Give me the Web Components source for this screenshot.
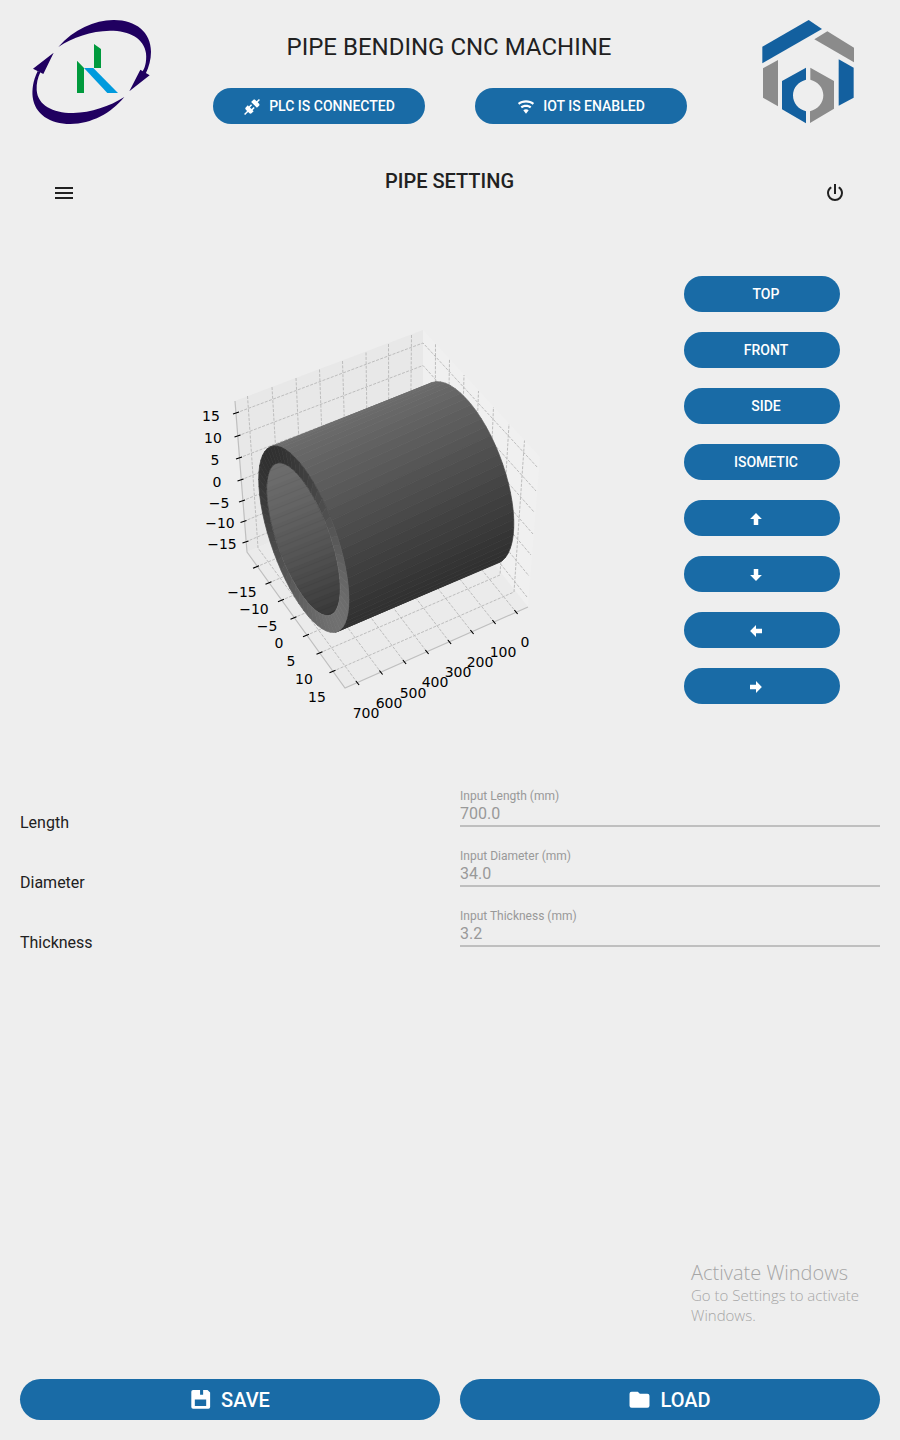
<!DOCTYPE html>
<html lang="en">
<head>
<meta charset="utf-8">
<meta name="viewport" content="width=device-width, initial-scale=1">
<title>Pipe Bending CNC Machine</title>
<style>
  body { margin: 0; background: #eee; color: #212121; font-family: Roboto, "Liberation Sans", sans-serif; }
</style>
</head>
<body>
<pipe-app></pipe-app>

<script>
const ICONS = {
  connection: '<path d="M21.4 7.5C22.2 8.3 22.2 9.6 21.4 10.3L18.6 13.1L10.8 5.3L13.6 2.5C14.4 1.7 15.7 1.7 16.4 2.5L18.2 4.3L21.2 1.3L22.6 2.7L19.6 5.7L21.4 7.5M15.6 13.3L14.2 11.9L11.4 14.7L9.3 12.6L12.1 9.8L10.7 8.4L7.9 11.2L6.4 9.8L3.6 12.6C2.8 13.4 2.8 14.7 3.6 15.4L5.4 17.2L1.4 21.2L2.8 22.6L6.8 18.6L8.6 20.4C9.4 21.2 10.7 21.2 11.4 20.4L14.2 17.6L12.8 16.2L15.6 13.3Z"/>',
  wifi: '<path d="M12,21L15.6,16.2C14.6,15.45 13.35,15 12,15C10.65,15 9.4,15.45 8.4,16.2L12,21M12,3C7.95,3 4.21,4.34 1.2,6.6L3,9C5.5,7.12 8.62,6 12,6C15.38,6 18.5,7.12 21,9L22.8,6.6C19.79,4.34 16.05,3 12,3M12,9C9.3,9 6.81,9.89 4.8,11.4L6.6,13.8C8.1,12.67 9.97,12 12,12C14.03,12 15.9,12.67 17.4,13.8L19.2,11.4C17.19,9.89 14.7,9 12,9Z"/>',
  up: '<path d="M15,20H9V12H4.16L12,4.16L19.84,12H15V20Z"/>',
  down: '<path d="M9,4H15V12H19.84L12,19.84L4.16,12H9V4Z"/>',
  left: '<path d="M20,9V15H12V19.84L4.16,12L12,4.16V9H20Z"/>',
  right: '<path d="M4,15V9H12V4.16L19.84,12L12,19.84V15H4Z"/>',
  save: '<path fill-rule="evenodd" d="M3.500 1H5.500V9H18.500V1H20L23 4V20.500A2 2 0 0 1 21 22.500H3.500A2 2 0 0 1 1.500 20.500V3A2 2 0 0 1 3.500 1ZM5.500 12V19.500H18.500V12ZM5.500 1H11.500V6.500H15V1H18.500V9H5.500Z"/>',
  folder: '<path d="M10 3H3A2.4 2.4 0 0 0 .6 5.400V19A2.400 2.400 0 0 0 3 21.400H21A2.400 2.400 0 0 0 23.400 19V7.800A2.400 2.400 0 0 0 21 5.400H12.400Z"/>',
  menu: '<path d="M3,6H21V8H3V6M3,11H21V13H3V11M3,16H21V18H3V16Z"/>',
  power: '<path d="M16.56,5.44L15.11,6.89C16.84,7.94 18,9.83 18,12A6,6 0 0,1 12,18A6,6 0 0,1 6,12C6,9.83 7.16,7.94 8.88,6.88L7.44,5.44C5.36,6.88 4,9.28 4,12A8,8 0 0,0 12,20A8,8 0 0,0 20,12C20,9.28 18.64,6.88 16.56,5.44M13,3H11V13H13"/>'
};
const icon = name => `<svg viewBox="0 0 24 24" aria-hidden="true">${ICONS[name] || ''}</svg>`;

function define(name, render) {
  customElements.define(name, class extends HTMLElement {
    constructor() { super(); this.attachShadow({ mode: 'open' }); }
    connectedCallback() { this.shadowRoot.innerHTML = render(this); }
  });
}

/* Pill button: an icon place followed by a slotted caption. */
define('pill-button', el => `
<style>
  :host { display: block; }
  button { box-sizing: border-box; width: 100%; height: 36px; border: 0; border-radius: 24px; padding: 0 16px;
    display: flex; align-items: center; justify-content: center; gap: 8px; background: #196ba6; color: #fff;
    font: 500 14px/20px Roboto, "Liberation Sans", sans-serif; white-space: nowrap; cursor: pointer; }
  svg { width: 18px; height: 18px; fill: currentColor; margin-top: 2px; flex: none; }
  span { min-width: 4px; }
  :host(:not([icon])) svg { width: 0; }
  :host([large]) button { height: 41px; font-size: 20px; line-height: 24px; gap: 10px; }
  :host([large]) svg { width: 21px; height: 21px; margin-top: 0; }
</style>
<button type="button" aria-label="${el.getAttribute('label') || el.textContent.trim()}">${icon(el.getAttribute('icon'))}<span><slot></slot></span></button>`);

define('icon-button', el => `
<style>
  :host { display: block; }
  button { display: block; width: 48px; height: 48px; padding: 12px; border: 0; background: none; color: inherit; cursor: pointer; }
  svg { display: block; width: 24px; height: 24px; fill: currentColor; }
</style>
<button type="button" aria-label="${el.getAttribute('label')}">${icon(el.getAttribute('icon'))}</button>`);

define('orbit-logo', () => `
<style>:host { display: block; } svg { display: block; width: 145px; height: 125px; }</style>
<svg viewBox="0 0 435 375" role="img" aria-label="K logo">
  <g fill="#200060">
    <path d="M115 111C161 58 224 31 280 30C346 29 393 66 393 125C393 148 387 170 377 191L367 185C373 178 381 157 378 130C373 86 329 62 270 62C213 63 158 82 115 111Z"/>
    <path d="M53 183C38 215 36 240 38 261C44 312 90 342 151 342C215 341 273 310 313 261C269 289 213 308 160 309C101 310 53 287 50 240C49 220 53 204 61 187Z"/>
    <path d="M101 128L39 176L70 192ZM328 244L361 179L389 196Z"/>
  </g>
  <path fill="#009a3d" d="M171 152L192 174V249H171ZM222 102L243 117V174H222Z"/>
  <path fill="#009add" d="M192 174H220L294 249H262Z"/>
</svg>`);

define('hex-logo', () => `
<style>:host { display: block; } svg { display: block; width: 125px; height: 125px; }</style>
<svg viewBox="0 0 375 375" role="img" aria-label="Hexagon logo">
  <g fill="#13609f">
    <path d="M52 110L191 30L231 57L52 160Z"/>
    <path d="M281 148L326 173V263L281 287Z"/>
    <path d="M183 173V209C160 215 144 233 144 256C144 280 160 298 183 304V340L111 298V213Z"/>
  </g>
  <g fill="#8b8b8b">
    <path d="M208 88L247 64L327 113V157Z"/>
    <path d="M54 175L99 150V289L54 263Z"/>
    <path d="M196 173L267 213V296L195 339V304C218 298 235 280 235 256C235 233 219 215 196 209Z"/>
  </g>
</svg>`);

define('machine-header', () => `
<style>
  :host { display: grid; grid-template-columns: 184px 1fr 184px; align-items: start; padding: 10px 0 9px; }
  orbit-logo { justify-self: center; }
  hex-logo { justify-self: center; padding-right: 2px; }
  .middle { padding: 22px 0 0; }
  h1 { margin: 0; font-size: 24px; line-height: 30px; font-weight: 400; text-align: center; padding-right: 2px; }
  .status { display: flex; justify-content: center; gap: 50px; margin-top: 26px; }
  .status pill-button { flex: 0 1 212px; }
</style>
<orbit-logo></orbit-logo>
<div class="middle">
  <h1>PIPE BENDING CNC MACHINE</h1>
  <div class="status">
    <pill-button icon="connection">PLC IS CONNECTED</pill-button>
    <pill-button icon="wifi">IOT IS ENABLED</pill-button>
  </div>
</div>
<hex-logo></hex-logo>`);

define('screen-bar', () => `
<style>
  :host { display: grid; grid-template-columns: 48px 1fr 48px; padding: 25px 41px 0 40px; }
  h2 { margin: 0; font-size: 20px; line-height: 24px; font-weight: 500; text-align: center; }
</style>
<icon-button icon="menu" label="Menu"></icon-button>
<h2><slot></slot></h2>
<icon-button icon="power" label="Power"></icon-button>`);

/* Perspective plot of the pipe: walls, grid, ticks and a shaded tube. */
function drawPlot() {
  const grey = v => { v = Math.round(v); return `rgb(${v},${v},${v})`; };
  const poly = (pts, fill, stroke) => `<polygon points="${pts.map(p => p.map(n => n.toFixed(2)).join()).join(' ')}" fill="${fill}"${stroke ? ` stroke="${stroke}" stroke-width=".7"` : ''}/>`;
  const path = pts => 'M' + pts.map(p => p.join()).join('L');
  const lerp = (a, b, k) => a + (b - a) * k;

  const zAxis = [[236, 413], [237.5, 436], [239, 458], [240.5, 480], [242, 501], [243.5, 521.5], [245.5, 542]];
  const zCorner = [343, 365.5, 387, 408, 428, 447, 467];
  const zRight = [[538, 468], [536, 491], [534, 512], [533, 534], [531, 555], [529, 576], [527, 597]];
  const xTop = [[247.5, 396], [272, 387], [296, 378], [319.5, 369.5], [342.5, 361], [366, 352.5], [388.5, 344], [411.5, 335]];
  const xBase = [[258, 548], [281, 538], [303, 528], [325, 518], [347, 508], [368, 499], [389, 490], [410, 481]];
  const xAxis = [[357.5, 683], [381, 672.5], [404.5, 662], [427, 652], [449.5, 642], [472, 632], [494, 622], [516, 612]];
  const yAxis = [[256, 567], [268.5, 583], [281, 600.5], [293.5, 618], [306, 635.5], [319.5, 653], [332.5, 671.5]];
  const yBase = [[435, 492], [447, 508], [460, 525], [473, 541], [487, 558], [500, 575], [514, 592]];
  const yTop = [[435.5, 344], [449.5, 359], [464, 375], [478.5, 391], [493.5, 407], [509, 424], [524.5, 440.5]];

  let out = poly([[235, 401], [423, 330], [423, 475], [247, 552]], '#e8e8e8')
    + poly([[423, 330], [540, 457], [528, 607], [423, 475]], '#f0f0f0')
    + poly([[247, 552], [345, 688], [528, 607], [423, 475]], '#ebebeb');
  const grid = [
    ...zAxis.map((p, i) => path([p, [423, zCorner[i]], zRight[i]])),
    ...xTop.map((p, i) => path([p, xBase[i], xAxis[i]])),
    ...yAxis.map((p, i) => path([p, yBase[i], yTop[i]]))
  ];
  out += `<path d="${grid.join('')}" fill="none" stroke="#bdbdbd" stroke-width="1" stroke-dasharray="3 1.4"/>`;
  out += '<path d="M235 401L247 552L345 688L528 607" fill="none" stroke="#bfbfbf" stroke-width="1.2"/>';
  const tick = (p, dx, dy) => path([[p[0] - dx, p[1] - dy], [p[0] + dx, p[1] + dy]]);
  out += `<path d="${[...zAxis.map(p => tick(p, 3, -1)), ...yAxis.map(p => tick(p, 3, -1.2)), ...xAxis.map(p => tick(p, 1.6, 2))].join('')}" stroke="#000" stroke-width="1.2" fill="none"/>`;

  const on = (e, t) => [e.x + e.w * Math.cos(t), e.y + e.h * Math.cos(t - e.d)];
  const front = { x: 303.8, y: 539.2, w: 45.1, h: 93.3, d: .87 };
  const bore = { x: 303.4, y: 539.2, w: 36.8, h: 76.4, d: .86 };
  const back = { x: 464.8, y: 472.9, w: 49, h: 91.2, d: .98 };

  const from = -2.4, to = .8, n = 30;
  for (let i = 0; i < n; i++) {
    const a = lerp(from, to, i / n), b = lerp(from, to, (i + 1) / n);
    const c = grey(77.5 - 30.5 * Math.sin((a + b) / 2 + .8));
    out += poly([on(front, a), on(front, b), on(back, b), on(back, (a + b) / 2), on(back, a)], c, c);
  }
  const ring = (e, k) => Array.from({ length: k }, (_, i) => on(e, i / k * 2 * Math.PI));
  out += `<clipPath id="bore">${poly(ring(bore, 90), '#000')}</clipPath><g clip-path="url(#bore)">`;
  for (let i = 0; i < 24; i++) {
    const y = 425 + i * 10;
    const c = grey(lerp(114, 50, Math.pow(i / 23, 1.6)));
    out += poly([[250, y], [360, y - 44], [360, y - 32], [250, y + 12]], c);
    out += `<path d="M250 ${y + 4}L360 ${y - 40}" stroke="#000" stroke-opacity=".08" stroke-width=".7"/>`;
  }
  out += '</g>';
  const m = 60;
  for (let i = 0; i < m; i++) {
    const a = i / m * 2 * Math.PI, b = (i + 1) / m * 2 * Math.PI;
    const c = grey(80 + 32 * Math.cos((a + b) / 2 - .6));
    out += poly([on(front, a), on(front, b), on(bore, b), on(bore, a)], c, c);
  }

  const label = (s, x, y) => `<text x="${x}" y="${y}">${s}</text>`;
  const values = ['−15', '−10', '−5', '0', '5', '10', '15'];
  const zPos = [[222, 549], [220, 528], [219, 508], [217, 487], [215, 465], [213, 443], [211, 421]];
  const yPos = [[242, 597], [254, 614], [267, 631], [279, 648], [291, 666], [304, 684], [317, 702]];
  const xPos = [[525, 647], [503, 657], [480, 667], [458, 677], [435, 687], [413, 698], [389, 708], [366, 718]];
  out += '<g font-family="DejaVu Sans, sans-serif" font-size="14" fill="#000" text-anchor="middle">'
    + values.map((v, i) => label(v, ...zPos[i])).join('')
    + values.map((v, i) => label(v, ...yPos[i])).join('')
    + xPos.map((p, i) => label(i * 100, ...p)).join('') + '</g>';
  return out;
}

define('pipe-plot', () => `
<style>:host { display: block; } svg { display: block; width: 360px; height: 410px; }</style>
<svg viewBox="192 320 360 410" role="img" aria-label="3D view of the pipe">${drawPlot()}</svg>`);

define('pipe-viewer', () => `
<style>
  :host { display: grid; grid-template-columns: 1fr 156px; padding: 59px 60px 0; }
  pipe-plot { justify-self: center; margin-top: 44px; }
  .views { display: flex; flex-direction: column; gap: 20px; }
</style>
<pipe-plot></pipe-plot>
<div class="views">
  <pill-button>TOP</pill-button>
  <pill-button>FRONT</pill-button>
  <pill-button>SIDE</pill-button>
  <pill-button>ISOMETIC</pill-button>
  <pill-button icon="up" label="Rotate up"></pill-button>
  <pill-button icon="down" label="Rotate down"></pill-button>
  <pill-button icon="left" label="Rotate left"></pill-button>
  <pill-button icon="right" label="Rotate right"></pill-button>
</div>`);

define('pipe-field', el => `
<style>
  :host { display: grid; grid-template-columns: 1fr 1fr; gap: 20px; height: 40px; }
  .name { font-size: 16px; line-height: 20px; align-self: end; margin-bottom: -6px; }
  .box { display: flex; flex-direction: column; border-bottom: 2px solid #bfbfbf; color: #999; padding-top: 1px; }
  .hint { font-size: 12px; line-height: 16px; }
  input { border: 0; padding: 0; margin: 0; width: 100%; height: 20px; background: none; outline: 0; color: inherit;
    font: 400 16px/20px Roboto, "Liberation Sans", sans-serif; }
</style>
<label class="name" for="value">${el.getAttribute('name')}</label>
<div class="box">
  <label class="hint" for="value">Input ${el.getAttribute('name')} (mm)</label>
  <input id="value" type="text" inputmode="decimal" value="${el.getAttribute('value')}">
</div>`);

define('pipe-app', () => `
<style>
  :host { box-sizing: border-box; min-height: 100vh; display: flex; flex-direction: column; position: relative; padding-bottom: 20px; }
  form { display: flex; flex-direction: column; gap: 20px; padding: 57px 20px 0; }
  footer { display: grid; grid-template-columns: 1fr 1fr; gap: 20px; padding: 0 20px; margin-top: auto; }
  .notice { position: absolute; right: 32px; bottom: 115px; width: 177px; color: #a6a6a6; pointer-events: none;
    font-family: "Open Sans", "Noto Sans", sans-serif; font-weight: 300; }
  .notice p { margin: 0; font-size: 15px; line-height: 20px; }
  .notice .title { font-size: 20px; line-height: 24px; }
</style>
<machine-header></machine-header>
<screen-bar>PIPE SETTING</screen-bar>
<pipe-viewer></pipe-viewer>
<form>
  <pipe-field name="Length" value="700.0"></pipe-field>
  <pipe-field name="Diameter" value="34.0"></pipe-field>
  <pipe-field name="Thickness" value="3.2"></pipe-field>
</form>
<footer>
  <pill-button large icon="save">SAVE</pill-button>
  <pill-button large icon="folder">LOAD</pill-button>
</footer>
<aside class="notice">
  <p class="title">Activate Windows</p>
  <p>Go to Settings to activate Windows.</p>
</aside>`);
</script>
</body>
</html>
